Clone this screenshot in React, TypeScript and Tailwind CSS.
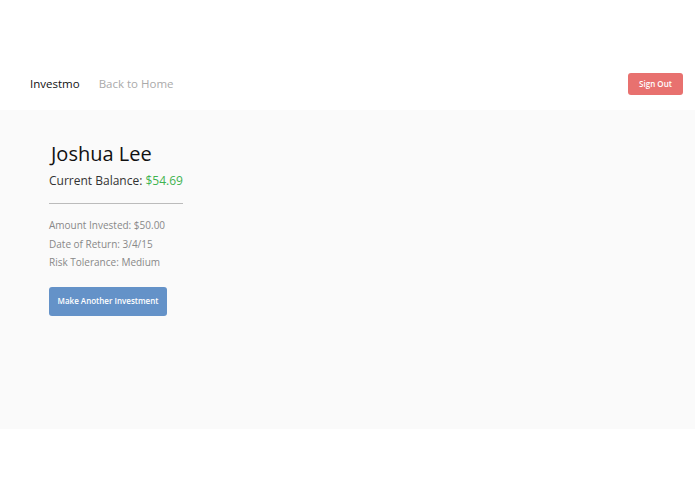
export default function App() {
  const font = { fontFamily: '"Open Sans", "Noto Sans", sans-serif' };
  return (
    <div className="w-[695px] h-[494px] bg-white" style={font}>
      <div className="h-[110px] flex items-end">
        <div className="w-full h-[52px] flex items-center px-[30px] justify-between">
          <div className="flex items-center gap-[19px] text-[11.5px]">
            <span className="text-[#111]">Investmo</span>
            <span className="text-[#aaa]">Back to Home</span>
          </div>
          <button className="mr-[-18px] w-[55px] h-[22px] rounded-[3px] bg-[#e8716f] text-white text-[8px] font-semibold">
            Sign Out
          </button>
        </div>
      </div>
      <div className="h-[319px] bg-[#fafafa] pl-[49px] pt-[30px]">
        <div className="text-[20px] leading-[28px] text-[#111] pl-[2px]">Joshua Lee</div>
        <div className="mt-[4px] text-[12px] leading-[18px] text-[#333]">
          Current Balance: <span className="text-[#3fb34f]">$54.69</span>
        </div>
        <div className="mt-[13px] w-[134px] h-px bg-[#bbb]"></div>
        <div className="mt-[12px] text-[10px] leading-[18.5px] text-[#888]">
          <div>Amount Invested: $50.00</div>
          <div>Date of Return: 3/4/15</div>
          <div>Risk Tolerance: Medium</div>
        </div>
        <button className="mt-[15px] w-[118px] h-[29px] rounded-[3px] bg-[#6492c8] text-white text-[8px] font-semibold">
          Make Another Investment
        </button>
      </div>
    </div>
  );
}
